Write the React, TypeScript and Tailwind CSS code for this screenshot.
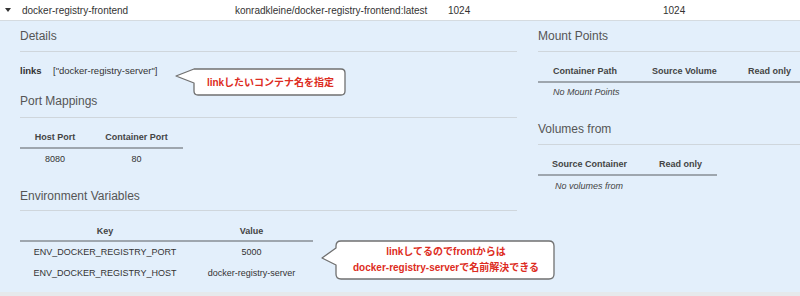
import React from "react";

const Heading = ({ children, h, mt }: { children: React.ReactNode; h: string; mt?: string }) => (
  <div className={`flex items-center border-b border-[#cfd6dc] text-[12px] text-[#555] ${h} ${mt ?? ""}`}>{children}</div>
);

export default function App() {
  return (
    <div className="relative w-[800px] h-[296px] overflow-hidden bg-[#e6e9ec] font-['Liberation_Sans',Arial,sans-serif] text-[#333]">
      {/* top row */}
      <div className="flex h-[21px] items-center border-b border-[#d5dbe0] bg-white text-[10px] text-[#333]">
        <div className="flex w-[22px] justify-start pl-[5px]">
          <svg width="6" height="4" viewBox="0 0 6 4">
            <path d="M0 0 L6 0 L3 4 Z" fill="#333" />
          </svg>
        </div>
        <div className="w-[213px]">docker-registry-frontend</div>
        <div className="w-[213px]">konradkleine/docker-registry-frontend:latest</div>
        <div className="w-[215px]">1024</div>
        <div>1024</div>
      </div>

      {/* panel */}
      <div className="flex h-[271px] bg-[#e3effb] pl-[20px]">
        {/* left column */}
        <div className="flex w-[497px] flex-col">
          <Heading h="h-[31px]">Details</Heading>
          <div className="mt-[11px] flex h-[16px] items-center text-[9.5px]">
            <span className="w-[33px] font-bold text-[#333]">links</span>
            <span>["docker-registry-server"]</span>
          </div>
          <Heading h="h-[33px]" mt="mt-[6px]">Port Mappings</Heading>
          <div className="mt-[11px] w-[163px] text-[9px]">
            <div className="flex h-[20px] items-center border-b-2 border-[#9ea6ae] font-bold text-[#444]">
              <div className="w-[70px] text-center">Host Port</div>
              <div className="flex-1 text-center">Container Port</div>
            </div>
            <div className="flex h-[22px] items-center">
              <div className="w-[70px] text-center">8080</div>
              <div className="flex-1 text-center">80</div>
            </div>
          </div>
          <Heading h="h-[29px]" mt="mt-[11px]">Environment Variables</Heading>
          <div className="mt-[13px] w-[293px] text-[9px]">
            <div className="flex h-[18px] items-center border-b-2 border-[#9ea6ae] font-bold text-[#444]">
              <div className="w-[170px] text-center">Key</div>
              <div className="flex-1 text-center">Value</div>
            </div>
            <div className="flex h-[21px] items-center">
              <div className="w-[170px] text-center">ENV_DOCKER_REGISTRY_PORT</div>
              <div className="flex-1 text-center">5000</div>
            </div>
            <div className="flex h-[21px] items-center">
              <div className="w-[170px] text-center">ENV_DOCKER_REGISTRY_HOST</div>
              <div className="flex-1 text-center">docker-registry-server</div>
            </div>
          </div>
        </div>

        {/* right column */}
        <div className="ml-[21px] flex flex-1 flex-col">
          <Heading h="h-[31px]">Mount Points</Heading>
          <div className="mt-[11px] text-[9px]">
            <div className="flex h-[20px] items-center border-b-2 border-[#9ea6ae] font-bold text-[#444]">
              <div className="w-[99px] pl-[15px]">Container Path</div>
              <div className="w-[96px] pl-[15px]">Source Volume</div>
              <div className="flex-1 pl-[15px]">Read only</div>
            </div>
            <div className="flex h-[20px] items-center pl-[15px] italic text-[#444]">No Mount Points</div>
          </div>
          <Heading h="h-[31px]" mt="mt-[11px]">Volumes from</Heading>
          <div className="mt-[11px] w-[179px] text-[9px]">
            <div className="flex h-[20px] items-center border-b-2 border-[#9ea6ae] font-bold text-[#444]">
              <div className="w-[107px] pl-[14px]">Source Container</div>
              <div className="flex-1 pl-[14px]">Read only</div>
            </div>
            <div className="flex h-[22px] items-center pl-[17px] italic text-[#444]">No volumes from</div>
          </div>
        </div>
      </div>

      {/* callout bubbles */}
      <svg className="pointer-events-none absolute left-0 top-0" width="800" height="296" viewBox="0 0 800 296">
        <path
          d="M194 69 L341 69 Q345 69 345 73 L345 91 Q345 95 341 95 L198 95 Q194 95 194 91 L194 83 L176 76 Z"
          fill="#fff"
          stroke="#707070"
          strokeWidth="1.3"
          strokeLinejoin="round"
        />
        <path
          d="M341 241 L549 241 Q554 241 554 246 L554 274 Q554 279 549 279 L341 279 Q336 279 336 274 L336 265 L322 258 L336 248 L336 246 Q336 241 341 241 Z"
          fill="#fff"
          stroke="#707070"
          strokeWidth="1.3"
          strokeLinejoin="round"
        />
      </svg>
      <div className="absolute left-[194px] top-[69px] flex h-[26px] w-[151px] items-center justify-center pl-[2px] font-['Liberation_Sans','Noto_Sans_CJK_JP',sans-serif] text-[10px] font-bold text-[#dd2c22]">
        linkしたいコンテナ名を指定
      </div>
      <div className="absolute left-[336px] top-[241px] flex h-[38px] w-[218px] flex-col items-center justify-center pl-[2px] font-['Liberation_Sans','Noto_Sans_CJK_JP',sans-serif] text-[10px] font-bold leading-[16px] text-[#dd2c22]">
        <div>linkしてるのでfrontからは</div>
        <div>docker-registry-serverで名前解決できる</div>
      </div>
    </div>
  );
}
